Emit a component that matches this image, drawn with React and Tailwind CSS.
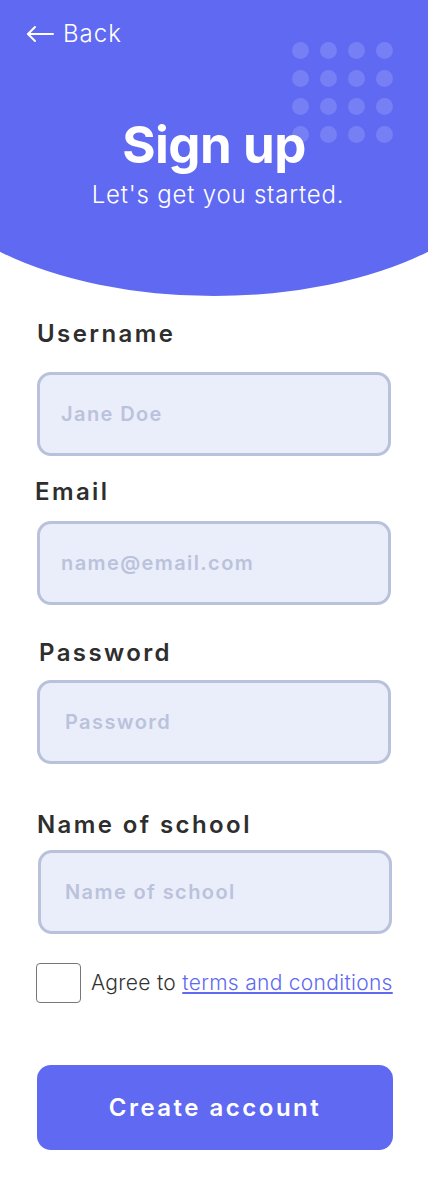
import { useState } from "react";

const font = { fontFamily: "Inter, 'Noto Sans', sans-serif" };

function Field({ label, placeholder, type = "text", labelClass, inputClass }) {
  return (
    <>
      <label className={`block text-[24px] leading-none font-semibold tracking-[2.4px] text-[#2e2e2e] ${labelClass}`}>
        {label}
      </label>
      <input
        type={type}
        placeholder={placeholder}
        className={`block w-[354px] h-[84px] rounded-[14px] border-[3px] border-[#b9c1db] bg-[#eaeefa] text-[20px] font-semibold tracking-[1.4px] text-[#2e2e2e] placeholder:text-[#bac2dc] outline-none ${inputClass}`}
      />
    </>
  );
}

export default function App() {
  const [agreed, setAgreed] = useState(false);

  return (
    <div className="w-[428px] min-h-[1191px] bg-white" style={font}>
      {/* header with curved bottom */}
      <div className="flex justify-center overflow-hidden h-[296px]">
        <div className="shrink-0 w-[600px] h-[296px] rounded-b-[50%] bg-[#6069f2]">
          <div className="relative w-[428px] mx-auto text-white">
            {/* dot pattern */}
            <div className="absolute left-[292px] top-[42px] grid grid-cols-4 gap-[11px]">
              {Array.from({ length: 16 }).map((_, i) => (
                <span key={i} className="w-[17px] h-[17px] rounded-full bg-white/15" />
              ))}
            </div>

            <div className="relative pt-[22px] pl-[26px] flex items-center gap-[9px]">
              <svg width="28" height="18" viewBox="0 0 28 18" fill="none" stroke="white" strokeWidth="2" strokeLinecap="round" strokeLinejoin="round">
                <path d="M27 9H2" />
                <path d="M9 2L2 9l7 7" />
              </svg>
              <span className="text-[24px] leading-none font-light tracking-[1px]">Back</span>
            </div>

            <h1 className="relative mt-[73px] text-center text-[51px] leading-none font-bold tracking-[-0.5px]">
              Sign up
            </h1>
            <p className="relative mt-[13px] pl-[8px] text-center text-[24px] leading-none font-light tracking-[0.8px]">
              Let's get you started.
            </p>
          </div>
        </div>
      </div>

      {/* form */}
      <form className="pl-[37px]" onSubmit={(e) => e.preventDefault()}>
        <Field label="Username" placeholder="Jane Doe" labelClass="mt-[26px]" inputClass="mt-[26px] pl-[21px]" />
        <Field label="Email" type="email" placeholder="name@email.com" labelClass="mt-[24px] -ml-[2px]" inputClass="mt-[17px] pl-[21px]" />
        <Field label="Password" type="password" placeholder="Password" labelClass="mt-[36px] ml-[2px]" inputClass="mt-[15px] pl-[25px]" />
        <Field label="Name of school" placeholder="Name of school" labelClass="mt-[49px]" inputClass="mt-[13px] ml-[1px] pl-[24px]" />

        <div className="mt-[29px] flex items-center gap-[10px] -ml-[1px]">
          <button
            type="button"
            onClick={() => setAgreed(!agreed)}
            className="w-[45px] h-[40px] rounded-[4px] border border-[#777777] bg-white"
          />
          <span className="text-[21px] font-light tracking-[0.3px] text-[#333333]">
            Agree to{" "}
            <a href="#" className="text-[#6069f2] underline underline-offset-2">
              terms and conditions
            </a>
          </span>
        </div>

        <button
          type="submit"
          className="mt-[62px] w-[356px] h-[85px] rounded-[14px] bg-[#6069f2] text-white text-[24px] font-semibold tracking-[2.5px]"
        >
          Create account
        </button>
      </form>
    </div>
  );
}
